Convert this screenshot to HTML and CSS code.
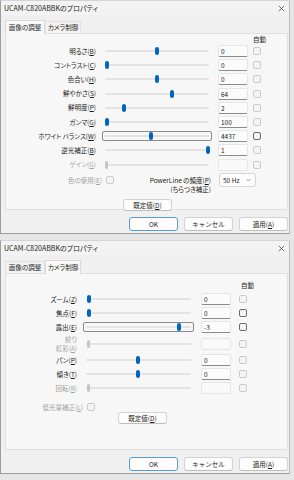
FILE: index.html
```html
<!DOCTYPE html>
<html lang="ja">

<head>
    <meta charset="UTF-8">
    <meta name="viewport" content="width=device-width, initial-scale=1.0">
    <title>UCAM-C820ABBKのプロパティ</title>
    <link rel="stylesheet" href="styles.css">
</head>

<body>
    <!-- 画像の調整 -->
    <div class="dialog">
        <div class="titlebar">
            <span class="title">UCAM-C820ABBKのプロパティ</span>
            <svg class="close" viewBox="0 0 8 8"><path d="M1 1L7 7M7 1L1 7" /></svg>
        </div>
        <div class="tabs">
            <div class="tab tab-active tab-wide">画像の調整</div>
            <div class="tab">カメラ制御</div>
        </div>
        <div class="panel">
            <div class="grid grid-image">
                <div class="auto-head">自動</div>

                <div class="label">明るさ(<u>B</u>)</div>
                <div class="slider"><div class="track"><span class="thumb" style="left: 50px"></span></div></div>
                <div class="value">0</div>
                <div class="check"></div>

                <div class="label">コントラスト(<u>C</u>)</div>
                <div class="slider"><div class="track"><span class="thumb" style="left: 0px"></span></div></div>
                <div class="value">0</div>
                <div class="check"></div>

                <div class="label">色合い(<u>H</u>)</div>
                <div class="slider"><div class="track"><span class="thumb" style="left: 50px"></span></div></div>
                <div class="value">0</div>
                <div class="check"></div>

                <div class="label">鮮やかさ(<u>S</u>)</div>
                <div class="slider"><div class="track"><span class="thumb" style="left: 65px"></span></div></div>
                <div class="value">64</div>
                <div class="check"></div>

                <div class="label">鮮明度(<u>P</u>)</div>
                <div class="slider"><div class="track"><span class="thumb" style="left: 17px"></span></div></div>
                <div class="value">2</div>
                <div class="check"></div>

                <div class="label">ガンマ(<u>G</u>)</div>
                <div class="slider"><div class="track"><span class="thumb" style="left: 0px"></span></div></div>
                <div class="value">100</div>
                <div class="check"></div>

                <div class="label">ホワイト バランス(<u>W</u>)</div>
                <div class="slider slider-focus"><div class="track"><span class="thumb" style="left: 44px"></span></div></div>
                <div class="value">4437</div>
                <div class="check check-on"></div>

                <div class="label">逆光補正(<u>B</u>)</div>
                <div class="slider"><div class="track"><span class="thumb" style="left: 101px"></span></div></div>
                <div class="value">1</div>
                <div class="check"></div>

                <div class="label disabled">ゲイン(<u>G</u>)</div>
                <div class="slider"><div class="track"><span class="thumb thumb-off" style="left: 0px"></span></div></div>
                <div class="value value-off"></div>
                <div class="check"></div>
            </div>

            <div class="option-row">
                <div class="option option-color">
                    <span class="disabled">色の使用(<u>E</u>)</span>
                    <span class="check"></span>
                </div>
                <div class="powerline">PowerLine の頻度(<u>P</u>)<br>(ちらつき補正)</div>
                <div class="select">50 Hz<svg viewBox="0 0 8 5"><path d="M1 1L4 4L7 1" /></svg></div>
            </div>

            <div class="default-row default-image">
                <button class="btn">既定値(<u>D</u>)</button>
            </div>
        </div>
        <div class="footer">
            <button class="btn btn-ok">OK</button>
            <button class="btn">キャンセル</button>
            <button class="btn">適用(<u>A</u>)</button>
        </div>
    </div>

    <!-- カメラ制御 -->
    <div class="dialog">
        <div class="titlebar">
            <span class="title">UCAM-C820ABBKのプロパティ</span>
            <svg class="close" viewBox="0 0 8 8"><path d="M1 1L7 7M7 1L1 7" /></svg>
        </div>
        <div class="tabs">
            <div class="tab tab-wide">画像の調整</div>
            <div class="tab tab-active">カメラ制御</div>
        </div>
        <div class="panel">
            <div class="grid grid-camera">
                <div class="auto-head">自動</div>

                <div class="label">ズーム(<u>Z</u>)</div>
                <div class="slider"><div class="track"><span class="thumb" style="left: 1px"></span></div></div>
                <div class="value">0</div>
                <div class="check"></div>

                <div class="label">焦点(<u>F</u>)</div>
                <div class="slider"><div class="track"><span class="thumb" style="left: 1px"></span></div></div>
                <div class="value">0</div>
                <div class="check check-on"></div>

                <div class="label">露出(<u>E</u>)</div>
                <div class="slider slider-focus"><div class="track"><span class="thumb" style="left: 91px"></span></div></div>
                <div class="value">-3</div>
                <div class="check check-on"></div>

                <div class="label label-two disabled">絞り<br>虹彩(<u>A</u>)</div>
                <div class="slider"><div class="track"><span class="thumb thumb-off" style="left: 1px"></span></div></div>
                <div class="value value-off"></div>
                <div class="check"></div>

                <div class="label">パン(<u>P</u>)</div>
                <div class="slider"><div class="track"><span class="thumb" style="left: 50px"></span></div></div>
                <div class="value">0</div>
                <div class="check"></div>

                <div class="label">傾き(<u>T</u>)</div>
                <div class="slider"><div class="track"><span class="thumb" style="left: 50px"></span></div></div>
                <div class="value">0</div>
                <div class="check"></div>

                <div class="label disabled">回転(<u>R</u>)</div>
                <div class="slider"><div class="track"><span class="thumb thumb-off" style="left: 1px"></span></div></div>
                <div class="value value-off"></div>
                <div class="check"></div>
            </div>

            <div class="option-row option-low">
                <div class="option option-lowlight">
                    <span class="disabled">低光量補正(<u>L</u>)</span>
                    <span class="check"></span>
                </div>
            </div>

            <div class="default-row default-camera">
                <button class="btn">既定値(<u>D</u>)</button>
            </div>
        </div>
        <div class="footer">
            <button class="btn btn-ok">OK</button>
            <button class="btn">キャンセル</button>
            <button class="btn">適用(<u>A</u>)</button>
        </div>
    </div>
</body>

</html>
```

FILE: styles.css
```css
body,
html {
    margin: 0;
    padding: 0;
    background: #e6e6e6;
    font-family: 'Noto Sans CJK JP', 'Noto Sans', sans-serif;
    font-feature-settings: 'palt';
    color: #1b1b1b;
}

body {
    padding-bottom: 6px;
}

.dialog {
    box-sizing: border-box;
    width: 290px;
    height: 234px;
    margin-bottom: 6px;
    background: #f0f0f0;
    border: 1px solid #9c9c9c;
    border-top-color: #d4d4d4;
    border-right-color: #bdbdbd;
}

.titlebar {
    display: flex;
    align-items: center;
    justify-content: space-between;
    height: 14px;
    padding: 0 4px 0 3px;
    background: #f3f3f3;
}

.title {
    font-size: 7px;
    line-height: 10px;
}

.close {
    width: 7px;
    height: 7px;
    stroke: #333;
    stroke-width: 0.8;
    fill: none;
}

.tabs {
    display: flex;
    align-items: flex-end;
    height: 18px;
    padding-left: 4px;
}

.tab {
    box-sizing: border-box;
    width: 36px;
    height: 12px;
    border: 1px solid #e1e1e1;
    border-bottom: none;
    font-size: 6.5px;
    line-height: 11px;
    text-align: center;
    background: #f3f3f3;
}

.tab-wide {
    width: 40px;
}

.tab-active {
    position: relative;
    height: 14px;
    margin-bottom: -1px;
    line-height: 12px;
    background: #f9f9f9;
    border-color: #d9d9d9;
}

.panel {
    box-sizing: border-box;
    width: 283px;
    height: 177px;
    margin-left: 4px;
    background: #f7f7f7;
    border: 1px solid #e0e0e0;
}

.grid {
    display: grid;
    align-items: center;
    font-size: 6.5px;
}

.grid-image {
    grid-template-columns: 96px 110px 36px 13px;
    grid-template-rows: 10px repeat(9, 14.2px);
}

.grid-camera {
    padding-top: 4px;
    grid-template-columns: 77px 111px 37px 16px;
    grid-template-rows: 14px 14px 14px 14px 19px 14px 14px 14px;
}

.auto-head {
    grid-column: 1 / -1;
    line-height: 8px;
    white-space: nowrap;
}

.grid-image .auto-head {
    padding-left: 247px;
}

.grid-camera .auto-head {
    padding-left: 235px;
}

.label {
    padding-right: 6px;
    text-align: right;
    line-height: 9px;
    white-space: nowrap;
}

.disabled {
    color: #a2a2a2;
}

.slider {
    box-sizing: border-box;
    display: flex;
    align-items: center;
    height: 10px;
    padding: 0 2px;
    border: 1px solid transparent;
    border-radius: 2px;
}

.slider-focus {
    border-color: #8a8a8a;
}

.track {
    position: relative;
    flex: 1;
    height: 2px;
    background: #e3e3e3;
    border-radius: 1px;
}

.thumb {
    position: absolute;
    top: -3px;
    width: 4px;
    height: 8px;
    background: #0067c0;
    border-radius: 2px;
}

.thumb-off {
    width: 3px;
    background: #c6c6c6;
}

.value {
    box-sizing: border-box;
    justify-self: end;
    width: 30px;
    height: 12px;
    padding-left: 2px;
    line-height: 10px;
    color: #1b1b1b;
    background: #fbfbfb;
    border: 1px solid #e6e6e6;
    border-bottom-color: #8b8b8b;
    border-radius: 2px;
}

.value-off {
    background: #f9f9f9;
    border-bottom-color: #e6e6e6;
}

.check {
    box-sizing: border-box;
    display: block;
    justify-self: end;
    width: 8px;
    height: 8px;
    background: #f4f4f4;
    border: 1px solid #cbcbcb;
    border-radius: 2px;
}

.check-on {
    border-color: #6c6c6c;
}

.option-row {
    display: flex;
    align-items: flex-start;
    height: 20px;
    margin-top: 1px;
    font-size: 6.5px;
}

.option {
    display: flex;
    align-items: center;
    justify-content: flex-end;
    gap: 4px;
    height: 14px;
}

.option-color {
    width: 108px;
}

.powerline {
    width: 97px;
    padding-top: 3px;
    line-height: 9px;
    text-align: right;
}

.select {
    box-sizing: border-box;
    display: flex;
    align-items: center;
    justify-content: space-between;
    width: 37px;
    height: 14px;
    margin-left: 8px;
    padding: 0 4px 0 3px;
    background: #fdfdfd;
    border: 1px solid #d5d5d5;
    border-radius: 3px;
}

.select svg {
    width: 5px;
    height: 4px;
    stroke: #555;
    stroke-width: 0.9;
    fill: none;
}

.option-low {
    height: 10px;
    margin-top: 7px;
}

.option-lowlight {
    width: 89px;
    height: 10px;
}

.default-row {
    display: flex;
}

.default-image {
    margin-top: 6px;
    padding-left: 117px;
}

.default-camera {
    padding-left: 112px;
}

.btn {
    box-sizing: border-box;
    width: 49px;
    height: 12px;
    padding: 0;
    font-family: inherit;
    font-size: 6.5px;
    line-height: 10px;
    color: #1b1b1b;
    background: #fdfdfd;
    border: 1px solid #d3d3d3;
    border-bottom-color: #bdbdbd;
    border-radius: 3px;
}

.footer {
    display: flex;
    justify-content: flex-end;
    gap: 6px;
    margin-top: 7px;
    padding-right: 1px;
}

.footer .btn {
    height: 14px;
    line-height: 12px;
}

.btn-ok {
    border-color: #5b9bd5;
    border-bottom-color: #5b9bd5;
}
```
